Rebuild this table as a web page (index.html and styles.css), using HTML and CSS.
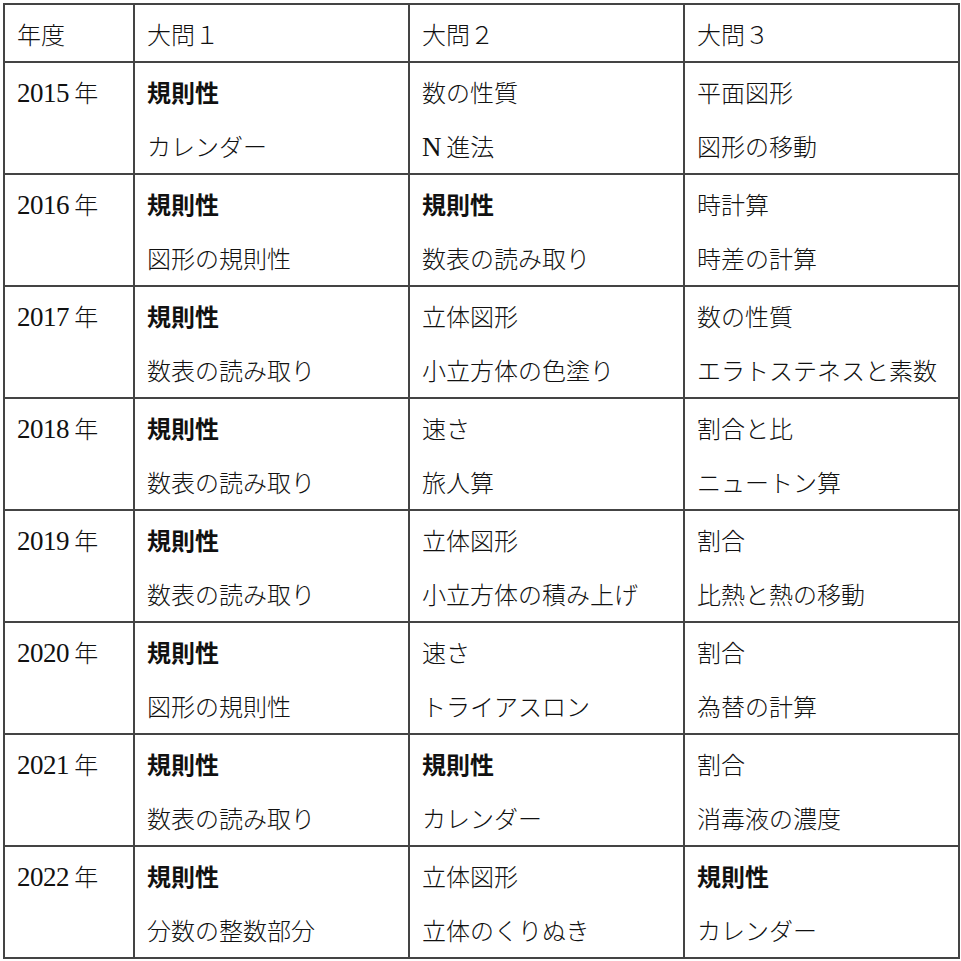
FILE: index.html
```html
<!DOCTYPE html>
<html lang="ja">
<head>
<meta charset="utf-8">
<title>出題分野</title>
<link rel="stylesheet" href="styles.css">
</head>
<body>
<table class="grid">
  <colgroup>
    <col class="c-year"><col class="c-q"><col class="c-q"><col class="c-q">
  </colgroup>
  <thead>
    <tr class="head"><th><div class="ln">年度</div></th><th><div class="ln">大問１</div></th><th><div class="ln">大問２</div></th><th><div class="ln">大問３</div></th></tr>
  </thead>
  <tbody>
    <tr><td><div class="ln"><span class="num">2015</span> 年</div></td><td><div class="ln b">規則性</div><div class="ln">カレンダー</div></td><td><div class="ln">数の性質</div><div class="ln"><span class="num">N</span> 進法</div></td><td><div class="ln">平面図形</div><div class="ln">図形の移動</div></td></tr>
    <tr><td><div class="ln"><span class="num">2016</span> 年</div></td><td><div class="ln b">規則性</div><div class="ln">図形の規則性</div></td><td><div class="ln b">規則性</div><div class="ln">数表の読み取り</div></td><td><div class="ln">時計算</div><div class="ln">時差の計算</div></td></tr>
    <tr><td><div class="ln"><span class="num">2017</span> 年</div></td><td><div class="ln b">規則性</div><div class="ln">数表の読み取り</div></td><td><div class="ln">立体図形</div><div class="ln">小立方体の色塗り</div></td><td><div class="ln">数の性質</div><div class="ln">エラトステネスと素数</div></td></tr>
    <tr><td><div class="ln"><span class="num">2018</span> 年</div></td><td><div class="ln b">規則性</div><div class="ln">数表の読み取り</div></td><td><div class="ln">速さ</div><div class="ln">旅人算</div></td><td><div class="ln">割合と比</div><div class="ln">ニュートン算</div></td></tr>
    <tr><td><div class="ln"><span class="num">2019</span> 年</div></td><td><div class="ln b">規則性</div><div class="ln">数表の読み取り</div></td><td><div class="ln">立体図形</div><div class="ln">小立方体の積み上げ</div></td><td><div class="ln">割合</div><div class="ln">比熱と熱の移動</div></td></tr>
    <tr><td><div class="ln"><span class="num">2020</span> 年</div></td><td><div class="ln b">規則性</div><div class="ln">図形の規則性</div></td><td><div class="ln">速さ</div><div class="ln">トライアスロン</div></td><td><div class="ln">割合</div><div class="ln">為替の計算</div></td></tr>
    <tr><td><div class="ln"><span class="num">2021</span> 年</div></td><td><div class="ln b">規則性</div><div class="ln">数表の読み取り</div></td><td><div class="ln b">規則性</div><div class="ln">カレンダー</div></td><td><div class="ln">割合</div><div class="ln">消毒液の濃度</div></td></tr>
    <tr><td><div class="ln"><span class="num">2022</span> 年</div></td><td><div class="ln b">規則性</div><div class="ln">分数の整数部分</div></td><td><div class="ln">立体図形</div><div class="ln">立体のくりぬき</div></td><td><div class="ln b">規則性</div><div class="ln">カレンダー</div></td></tr>
  </tbody>
</table>
</body>
</html>
```
FILE: styles.css
```css
html, body {
  margin: 0;
  padding: 0;
  background: #ffffff;
}
body {
  padding: 3px 0 0 3px;
  font-family: "Noto Sans CJK JP", sans-serif;
  color: #111111;
}
.grid {
  border-collapse: collapse;
  table-layout: fixed;
  width: 956px;
  border: 2px solid #3a3a3a;
}
.c-year { width: 130px; }
.c-q { width: 275px; }
.grid th,
.grid td {
  border: 2px solid #444444;
  text-align: left;
  vertical-align: top;
  padding: 2px 0 0 12px;
  white-space: nowrap;
  font-weight: 300;
}
.ln {
  height: 54px;
  line-height: 54px;
  font-size: 24px;
  font-weight: 300;
  overflow: hidden;
}
.ln.b {
  font-weight: 700;
}
.grid td {
  height: 108px;
}
.grid .head th {
  height: 54px;
}
.num {
  font-family: "Liberation Serif", serif;
  font-size: 27px;
  letter-spacing: -0.5px;
  font-weight: 400;
}
```
